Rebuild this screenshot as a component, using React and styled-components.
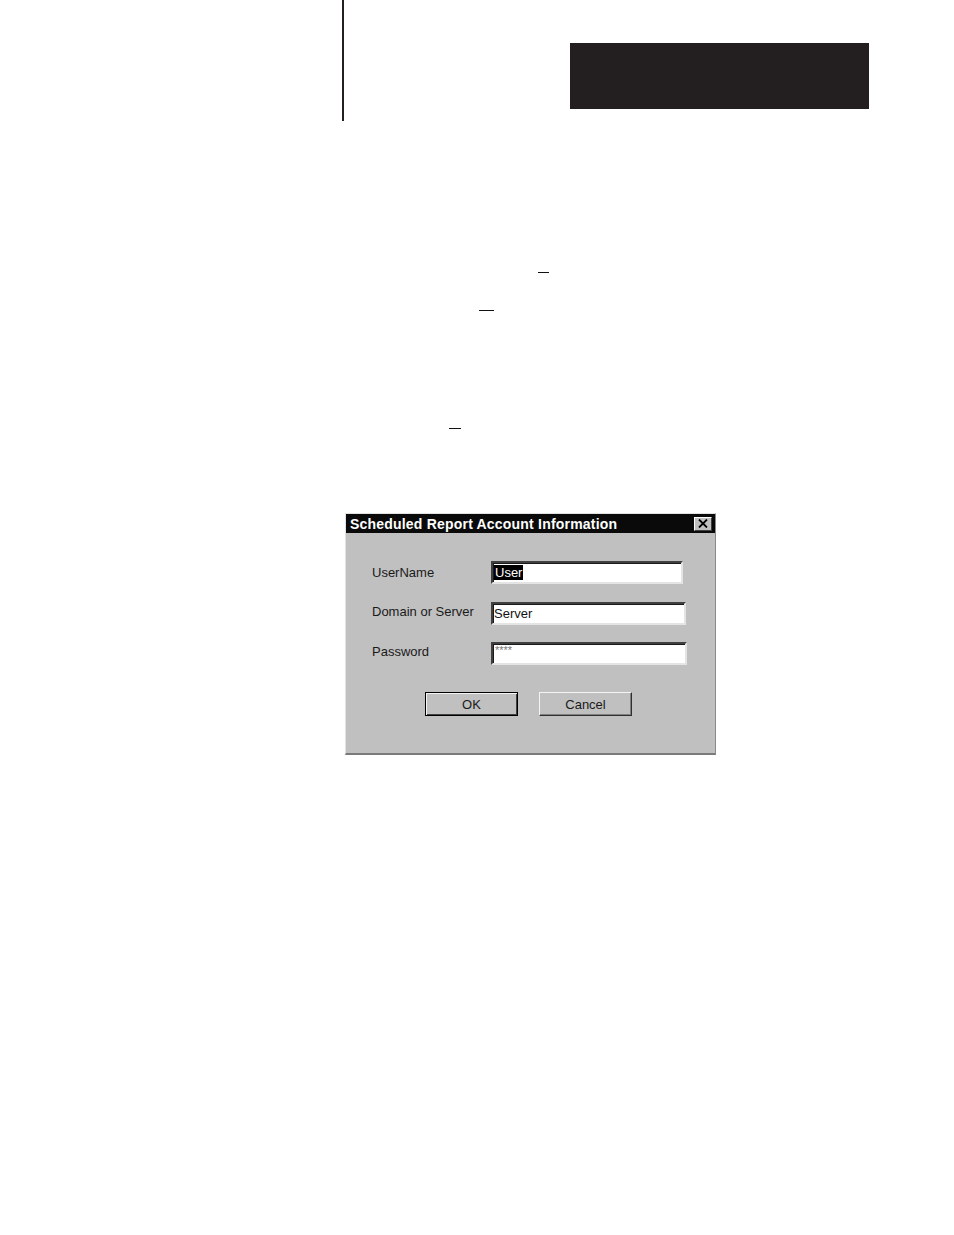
import React from "react";
import styled, { createGlobalStyle } from "styled-components";

const Global = createGlobalStyle`
  html, body { margin: 0; padding: 0; background: #ffffff; }
  body { font-family: "Liberation Sans", Arial, sans-serif; }
`;

const Page = styled.div`
  width: 954px;
  height: 1235px;
  background: #fff;
  display: flex;
  flex-direction: column;
  overflow: hidden;
`;

const Header = styled.div`
  display: flex;
  align-items: flex-start;
  height: 121px;
`;

const Rule = styled.div`
  margin-left: 342px;
  width: 2px;
  height: 121px;
  background: #231f20;
`;

const Tab = styled.div`
  margin-left: 226px;
  margin-top: 43px;
  width: 299px;
  height: 66px;
  background: #231f20;
`;

const Mark = styled.div`
  margin-left: ${(p) => p.$x}px;
  margin-top: ${(p) => p.$gap}px;
  width: ${(p) => p.$w}px;
  height: 1px;
  background: #111;
`;

const Window = styled.div`
  margin-left: 345px;
  margin-top: 84px;
  width: 371px;
  height: 242px;
  box-sizing: border-box;
  background: #c0c0c0;
  border-left: 1px solid #e2e2e2;
  border-top: 1px solid #e2e2e2;
  border-right: 1px solid #8a8a8a;
  border-bottom: 2px solid #7a7a7a;
  display: flex;
  flex-direction: column;
`;

const TitleBar = styled.div`
  height: 19px;
  background: #0a0a0a;
  display: flex;
  align-items: center;
  justify-content: space-between;
  padding: 0 3px 0 4px;
`;

const Title = styled.span`
  color: #fff;
  font-weight: bold;
  font-size: 14px;
  letter-spacing: 0.2px;
  white-space: nowrap;
`;

const CloseBtn = styled.div`
  width: 18px;
  height: 14px;
  box-sizing: border-box;
  background: #c0c0c0;
  border: 1px solid;
  border-color: #fff #404040 #404040 #fff;
  display: flex;
  align-items: center;
  justify-content: center;
`;

const Body = styled.div`
  padding: 28px 0 0 26px;
  display: flex;
  flex-direction: column;
`;

const Row = styled.div`
  display: grid;
  grid-template-columns: 119px auto;
  align-items: center;
  height: 23px;
  margin-bottom: ${(p) => p.$gap}px;
`;

const Label = styled.span`
  font-size: 13px;
  color: #1a1a1a;
  margin-top: ${(p) => p.$dy || 0}px;
`;

const Field = styled.div`
  width: ${(p) => p.$w}px;
  height: 23px;
  box-sizing: border-box;
  background: #fff;
  border-style: solid;
  border-width: 2px;
  border-color: #404040 #e4e4e4 #e4e4e4 #404040;
  box-shadow: inset 1px 1px 0 #1a1a1a;
  display: flex;
  align-items: center;
  padding-left: 1px;
  font-size: 13px;
  color: #111;
`;

const Selected = styled.span`
  background: #000;
  color: #fff;
  padding: 0 1px;
  line-height: 15px;
`;

const Stars = styled.span`
  align-self: flex-start;
  margin-top: 0px;
  padding-left: 1px;
  font-size: 11px;
  color: #777;
`;

const Buttons = styled.div`
  display: flex;
  gap: 21px;
  margin-left: 53px;
  margin-top: 27px;
`;

const Button = styled.div`
  width: 93px;
  height: 24px;
  box-sizing: border-box;
  background: #c0c0c0;
  border: 1px solid;
  border-color: ${(p) => (p.$default ? "#000" : "#f4f4f4 #303030 #303030 #f4f4f4")};
  box-shadow: ${(p) =>
    p.$default
      ? "inset 1px 1px 0 #f4f4f4, inset -1px -1px 0 #404040"
      : "inset -1px -1px 0 #808080"};
  display: flex;
  align-items: center;
  justify-content: center;
  font-size: 13px;
  color: #1a1a1a;
`;

export default function App() {
  return (
    <Page>
      <Global />
      <Header>
        <Rule />
        <Tab />
      </Header>
      <Mark $x={538} $w={11} $gap={151} />
      <Mark $x={479} $w={15} $gap={37} />
      <Mark $x={449} $w={12} $gap={117} />
      <Window>
        <TitleBar>
          <Title>Scheduled Report Account Information</Title>
          <CloseBtn>
            <svg width="10" height="9" viewBox="0 0 10 9">
              <path d="M1 0.5 L9 8.5 M9 0.5 L1 8.5" stroke="#000" strokeWidth="1.8" />
            </svg>
          </CloseBtn>
        </TitleBar>
        <Body>
          <Row $gap={18}>
            <Label $dy={-1}>UserName</Label>
            <Field $w={192}>
              <Selected>User</Selected>
            </Field>
          </Row>
          <Row $gap={17}>
            <Label $dy={-4}>Domain or Server</Label>
            <Field $w={195}>Server</Field>
          </Row>
          <Row $gap={0}>
            <Label $dy={-4}>Password</Label>
            <Field $w={196}>
              <Stars>****</Stars>
            </Field>
          </Row>
          <Buttons>
            <Button $default>OK</Button>
            <Button>Cancel</Button>
          </Buttons>
        </Body>
      </Window>
    </Page>
  );
}
